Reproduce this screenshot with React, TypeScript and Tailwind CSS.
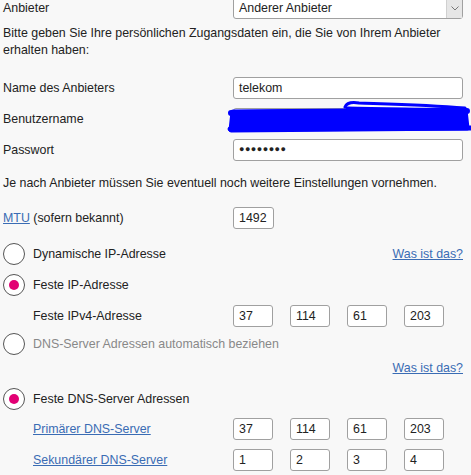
import React from 'react'

const font = { fontFamily: '"Liberation Sans", Arial, sans-serif' }

const Field: React.FC<{ value: string; className?: string }> = ({ value, className = '' }) => (
  <div className={`h-[22px] border border-[#a0a0a0] rounded-[3px] bg-white px-[5px] flex items-center text-[#222] ${className}`}>
    {value}
  </div>
)

const Radio: React.FC<{ checked?: boolean }> = ({ checked }) => (
  <div className="w-[22px] h-[22px] rounded-full border border-[#555] bg-white flex items-center justify-center shrink-0">
    {checked && <div className="w-[10px] h-[10px] rounded-full bg-[#e20074]" />}
  </div>
)

const IpRow: React.FC<{ label: React.ReactNode; parts: string[]; className?: string }> = ({ label, parts, className = '' }) => (
  <div className={`flex items-center h-[22px] ${className}`}>
    <div className="w-[230px] pl-[30px]">{label}</div>
    <div className="flex gap-[17px]">
      {parts.map((p, i) => (
        <Field key={i} value={p} className="w-[40px]" />
      ))}
    </div>
  </div>
)

const Scribble: React.FC = () => (
  <svg className="absolute left-[-6px] top-[-8px]" width="246" height="36" viewBox="0 0 246 36">
    <g fill="none" stroke="#0000ff" strokeLinecap="round" strokeLinejoin="round">
      <path d="M6 12 L238 10 L240 28 L4 30 Z" fill="#0000ff" strokeWidth="5" />
      <path d="M4 13 L240 11" strokeWidth="6" />
      <path d="M3 29 L244 28" strokeWidth="5" />
      <path d="M118 7 C 120 2, 126 2, 132 3 C 160 4, 200 5, 238 8" strokeWidth="3" />
      <path d="M120 8 C 160 9, 200 9, 236 10" strokeWidth="3" />
    </g>
  </svg>
)

export default function App() {
  return (
    <div className="w-[471px] h-[475px] overflow-hidden bg-[#f8f8f8] text-[12.4px] text-[#222]" style={font}>
      <div className="w-[463px] pl-[3px]">
        {/* Anbieter select */}
        <div className="flex items-center h-[22px] mt-[-3px]">
          <div className="w-[230px]">Anbieter</div>
          <div className="flex-1 h-[22px] border border-[#a0a0a0] rounded-[3px] bg-white flex items-center">
            <span className="flex-1 pl-[5px]">Anderer Anbieter</span>
            <div className="w-[16px] h-full bg-[#e6e6e6] border-l border-[#d0d0d0] flex items-center justify-center">
              <svg width="8" height="5" viewBox="0 0 8 5">
                <path d="M0.5 0.5 L4 4 L7.5 0.5" fill="none" stroke="#777" strokeWidth="1" />
              </svg>
            </div>
          </div>
        </div>

        <p className="mt-[6px] leading-[17px] pr-[10px]">
          Bitte geben Sie Ihre persönlichen Zugangsdaten ein, die Sie von Ihrem Anbieter erhalten haben:
        </p>

        <div className="flex items-center h-[22px] mt-[18px]">
          <div className="w-[230px]">Name des Anbieters</div>
          <Field value="telekom" className="flex-1" />
        </div>
        <div className="flex items-center h-[22px] mt-[9px]">
          <div className="w-[230px]">Benutzername</div>
          <div className="flex-1 relative">
            <Field value="" />
            <Scribble />
          </div>
        </div>
        <div className="flex items-center h-[22px] mt-[9px]">
          <div className="w-[230px]">Passwort</div>
          <Field value="●●●●●●●●" className="flex-1 text-[9px] tracking-[0.5px]" />
        </div>

        <p className="mt-[14px] leading-[16px]">
          Je nach Anbieter müssen Sie eventuell noch weitere Einstellungen vornehmen.
        </p>

        <div className="flex items-center h-[22px] mt-[16px]">
          <div className="w-[230px]">
            <a className="text-[#3a6cb4] underline">MTU</a> (sofern bekannt)
          </div>
          <Field value="1492" className="w-[41px]" />
        </div>

        <div className="flex items-center h-[22px] mt-[14px]">
          <Radio />
          <span className="ml-[8px] flex-1">Dynamische IP-Adresse</span>
          <a className="text-[#3a6cb4] underline">Was ist das?</a>
        </div>
        <div className="flex items-center h-[22px] mt-[9px]">
          <Radio checked />
          <span className="ml-[8px]">Feste IP-Adresse</span>
        </div>
        <IpRow label="Feste IPv4-Adresse" parts={['37', '114', '61', '203']} className="mt-[9px]" />

        <div className="flex items-center h-[22px] mt-[6px]">
          <Radio />
          <span className="ml-[8px] text-[#888]">DNS-Server Adressen automatisch beziehen</span>
        </div>
        <div className="flex justify-end h-[16px] items-center mt-[5px]">
          <a className="text-[#3a6cb4] underline">Was ist das?</a>
        </div>
        <div className="flex items-center h-[22px] mt-[12px]">
          <Radio checked />
          <span className="ml-[8px]">Feste DNS-Server Adressen</span>
        </div>
        <IpRow
          label={<a className="text-[#3a6cb4] underline">Primärer DNS-Server</a>}
          parts={['37', '114', '61', '203']}
          className="mt-[8px]"
        />
        <IpRow
          label={<a className="text-[#3a6cb4] underline">Sekundärer DNS-Server</a>}
          parts={['1', '2', '3', '4']}
          className="mt-[9px]"
        />
      </div>
    </div>
  )
}
